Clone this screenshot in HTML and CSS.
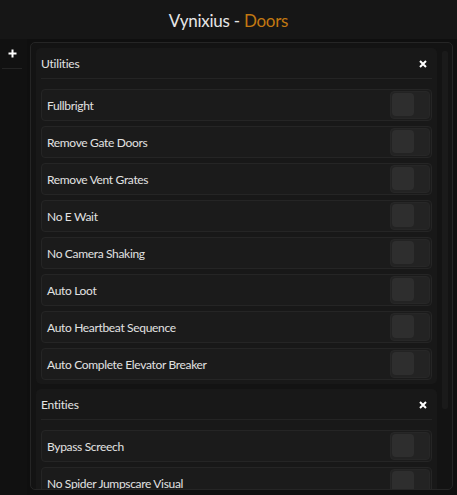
FILE: index.html
```html
<!DOCTYPE html>
<html>
<head>
<meta charset="utf-8">
<link rel="stylesheet" href="styles.css">
</head>
<body>
<div class="titlebar"><span class="t-white">Vynixius - </span><span class="t-orange">Doors</span></div>
<div class="main">
  <div class="sidebar">
    <div class="plus">
      <svg width="9" height="9" viewBox="0 0 9 9"><path d="M4.5 0.5V8.5M0.5 4.5H8.5" stroke="#fff" stroke-width="2"/></svg>
    </div>
    <div class="side-line"></div>
  </div>
  <div class="panel">
    <div class="content">
      <div class="section">
        <div class="sec-head">
          <span class="sec-title">Utilities</span>
          <svg class="close" width="8" height="8" viewBox="0 0 8 8"><path d="M1 1L7 7M7 1L1 7" stroke="#fff" stroke-width="2"/></svg>
        </div>
        <div class="divider"></div>
        <div class="rows">
          <div class="row"><span>Fullbright</span><div class="toggle"><div class="knob"></div></div></div>
          <div class="row"><span>Remove Gate Doors</span><div class="toggle"><div class="knob"></div></div></div>
          <div class="row"><span>Remove Vent Grates</span><div class="toggle"><div class="knob"></div></div></div>
          <div class="row"><span>No E Wait</span><div class="toggle"><div class="knob"></div></div></div>
          <div class="row"><span>No Camera Shaking</span><div class="toggle"><div class="knob"></div></div></div>
          <div class="row"><span>Auto Loot</span><div class="toggle"><div class="knob"></div></div></div>
          <div class="row"><span>Auto Heartbeat Sequence</span><div class="toggle"><div class="knob"></div></div></div>
          <div class="row"><span>Auto Complete Elevator Breaker</span><div class="toggle"><div class="knob"></div></div></div>
        </div>
      </div>
      <div class="section">
        <div class="sec-head">
          <span class="sec-title">Entities</span>
          <svg class="close" width="8" height="8" viewBox="0 0 8 8"><path d="M1 1L7 7M7 1L1 7" stroke="#fff" stroke-width="2"/></svg>
        </div>
        <div class="divider"></div>
        <div class="rows">
          <div class="row"><span>Bypass Screech</span><div class="toggle"><div class="knob"></div></div></div>
          <div class="row"><span>No Spider Jumpscare Visual</span><div class="toggle"><div class="knob"></div></div></div>
        </div>
      </div>
    </div>
    <div class="scroll"><div class="thumb"></div></div>
  </div>
</div>
</body>
</html>
```
FILE: styles.css
```css
* { box-sizing: border-box; }
html, body { margin: 0; padding: 0; }
body {
  width: 457px;
  height: 495px;
  overflow: hidden;
  background: #0f0f0f;
  font-family: Lato, "Noto Sans", sans-serif;
  color: #e2e2e2;
}
.titlebar {
  height: 39px;
  background: #161616;
  display: flex;
  align-items: center;
  justify-content: center;
  font-size: 17px;
  letter-spacing: -0.25px;
  padding-top: 1px;
}
.t-white { color: #e6e6e6; white-space: pre; }
.t-orange { color: #c27811; }
.main {
  display: flex;
  height: 456px;
}
.sidebar {
  width: 27px;
  flex: none;
  background: #111111;
  display: flex;
  flex-direction: column;
  align-items: center;
  padding-top: 10px;
}
.plus { height: 9px; display: flex; margin-left: -3px; }
.side-line {
  margin-top: 10px;
  width: 20px;
  height: 1px;
  background: #242424;
  margin-left: -3px;
}
.panel {
  flex: 1;
  margin: 3px 4px 5px 3px;
  border: 1px solid #252525;
  border-radius: 5px;
  background: #131313;
  padding: 5px 4px 0 5px;
  display: flex;
  gap: 5px;
  overflow: hidden;
}
.content {
  flex: 1;
  display: flex;
  flex-direction: column;
  gap: 5px;
  overflow: hidden;
}
.section {
  background: #181818;
  border-radius: 5px;
  padding: 0 5px 4px 5px;
  flex: none;
}
.sec-head {
  height: 30px;
  display: flex;
  align-items: center;
  justify-content: space-between;
  font-size: 12px;
  letter-spacing: -0.2px;
  padding-right: 5px;
  padding-top: 1px;
}
.sec-title { color: #e4e4e4; }
.divider { height: 1px; background: #242424; margin-bottom: 10px; }
.rows { display: flex; flex-direction: column; gap: 5px; }
.row {
  height: 32px;
  background: #1b1b1b;
  border: 1px solid #252525;
  border-radius: 4px;
  display: flex;
  align-items: center;
  justify-content: space-between;
  padding: 0 1px 0 5px;
  font-size: 12px;
  letter-spacing: -0.33px;
  color: #e2e2e2;
}
.toggle {
  width: 40px;
  height: 28px;
  background: #232323;
  border: 1px solid #272727;
  border-radius: 4px;
  padding: 1px;
}
.knob {
  width: 22px;
  height: 23px;
  background: #2e2e2e;
  border-radius: 4px;
}
.scroll {
  width: 6px;
  flex: none;
  padding-top: 3px;
}
.thumb {
  height: 358px;
  background: #1a1a1a;
  border-radius: 2px;
}
```
